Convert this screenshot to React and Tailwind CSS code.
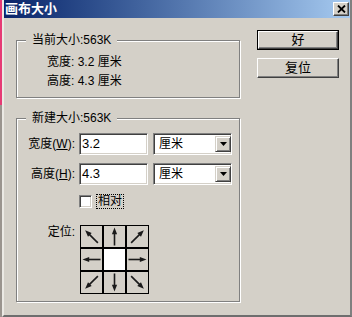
import React from "react";

const FONT = { fontFamily: '"Liberation Sans", "Noto Sans CJK SC", sans-serif' };

function Arrow({ angle }) {
  return (
    <svg width="21" height="21" viewBox="0 0 21 21">
      <g transform={`rotate(${angle} 10.5 10.5)`}>
        <line x1="10.5" y1="19.5" x2="10.5" y2="6" stroke="#1a1a1a" strokeWidth="1.6" />
        <polygon points="10.5,1.5 7.9,8.2 13.1,8.2" fill="#1a1a1a" />
      </g>
    </svg>
  );
}

function Cell({ angle, center }) {
  if (center) return <div className="w-[21px] h-[21px] bg-white" />;
  return (
    <div className="w-[21px] h-[21px] bg-[#d4d0c8] flex items-center justify-center">
      <Arrow angle={angle} />
    </div>
  );
}

function Sunken({ className = "", children }) {
  return (
    <div
      className={
        "border border-t-[#808080] border-l-[#808080] border-b-white border-r-white " +
        className
      }
    >
      <div className="w-full h-full shadow-[inset_1px_1px_0_#404040,inset_-1px_-1px_0_#d4d0c8] bg-white flex items-center">
        {children}
      </div>
    </div>
  );
}

function DropBtn() {
  return (
    <div className="w-[16px] h-[16px] bg-[#d4d0c8] border border-t-[#d4d0c8] border-l-[#d4d0c8] border-b-[#404040] border-r-[#404040] shadow-[inset_1px_1px_0_#fff,inset_-1px_-1px_0_#808080] flex items-center justify-center">
      <svg width="7" height="4" viewBox="0 0 7 4">
        <polygon points="0,0 7,0 3.5,4" fill="#000" />
      </svg>
    </div>
  );
}

function Group({ legend, className = "", children }) {
  return (
    <div
      className={
        "relative border border-[#808080] shadow-[inset_1px_1px_0_#fff,1px_1px_0_#fff] " +
        className
      }
    >
      <span className="absolute top-[-8px] left-[9px] px-[6px] bg-[#d4d0c8] text-[12px] leading-[14px] text-black">
        {legend}
      </span>
      {children}
    </div>
  );
}

export default function App() {
  const angles = [-45, 0, 45, -90, null, 90, -135, 180, 135];
  return (
    <div className="w-[352px] h-[317px] flex overflow-hidden bg-[#d4d0c8]" style={FONT}>
      <div className="w-[2px] h-full flex flex-col">
        <div className="h-[105px] bg-[#e63a74]" />
        <div className="flex-1 bg-[#9a948e]" />
      </div>
      <div className="flex-1 flex flex-col bg-[#d4d0c8] border-l-2 border-l-[#ebe9e4] border-r-2 border-r-[#808080] border-b-2 border-b-[#6e6e6e]">
        <div className="h-[18px] bg-gradient-to-r from-[#0a246a] to-[#a6caf0] flex items-center justify-between pl-[1px] pr-[1px]">
          <span className="text-white font-bold text-[13px] leading-[16px]">画布大小</span>
          <div className="w-[16px] h-[14px] bg-[#d4d0c8] border border-t-white border-l-white border-b-[#404040] border-r-[#404040] shadow-[inset_-1px_-1px_0_#808080] flex items-center justify-center">
            <svg width="9" height="8" viewBox="0 0 9 8">
              <path d="M1 0.5 L8 7.5 M8 0.5 L1 7.5" stroke="#000" strokeWidth="1.8" />
            </svg>
          </div>
        </div>

        <div className="flex pl-[12px] pt-[12px]">
          <div className="w-[224px] flex flex-col">
            <Group legend="当前大小:563K" className="mt-[10px] pt-[12px] pb-[6px] pl-[30px]">
              <div className="text-[12px] leading-[19px] text-black">宽度: 3.2 厘米</div>
              <div className="text-[12px] leading-[19px] text-black">高度: 4.3 厘米</div>
            </Group>

            <Group legend="新建大小:563K" className="mt-[20px] pt-[14px] pb-[7px]">
              <div className="flex items-center gap-[4px] h-[22px]">
                <div className="w-[58px] text-right text-[12px] text-black">
                  宽度(<span className="underline">W</span>):
                </div>
                <Sunken className="w-[69px] h-[22px]">
                  <span className="pl-[2px] text-[13px] text-black">3.2</span>
                </Sunken>
                <Sunken className="ml-[1px] w-[79px] h-[22px]">
                  <div className="flex-1 pl-[5px] text-[12px] text-black">厘米</div>
                  <DropBtn />
                </Sunken>
              </div>
              <div className="flex items-center gap-[4px] h-[22px] mt-[8px]">
                <div className="w-[58px] text-right text-[12px] text-black">
                  高度(<span className="underline">H</span>):
                </div>
                <Sunken className="w-[69px] h-[22px]">
                  <span className="pl-[2px] text-[13px] text-black">4.3</span>
                </Sunken>
                <Sunken className="ml-[1px] w-[79px] h-[22px]">
                  <div className="flex-1 pl-[5px] text-[12px] text-black">厘米</div>
                  <DropBtn />
                </Sunken>
              </div>
              <div className="flex items-center gap-[4px] h-[15px] mt-[9px]">
                <div className="w-[58px]" />
                <Sunken className="w-[13px] h-[13px]" />
                <span className="border border-dotted border-black px-[1px] text-[12px] leading-[13px] text-black">
                  相对
                </span>
              </div>
              <div className="flex items-start gap-[4px] mt-[16px]">
                <div className="w-[58px] text-right text-[12px] leading-[14px] text-black">定位:</div>
                <div className="ml-[1px] bg-black p-[1px] grid grid-cols-3 gap-[2px]">
                  {angles.map((a, i) => (
                    <Cell key={i} angle={a} center={a === null} />
                  ))}
                </div>
              </div>
            </Group>
          </div>

          <div className="ml-[17px] w-[82px] flex flex-col gap-[8px]">
            <div className="h-[20px] border border-black">
              <div className="w-full h-full bg-[#d4d0c8] border border-t-white border-l-white border-b-[#404040] border-r-[#404040] shadow-[inset_-1px_-1px_0_#808080] flex items-center justify-center text-[13px] text-black">
                好
              </div>
            </div>
            <div className="h-[20px] bg-[#d4d0c8] border border-t-white border-l-white border-b-[#404040] border-r-[#404040] shadow-[inset_-1px_-1px_0_#808080] flex items-center justify-center text-[13px] text-black">
              复位
            </div>
          </div>
        </div>
      </div>
    </div>
  );
}
